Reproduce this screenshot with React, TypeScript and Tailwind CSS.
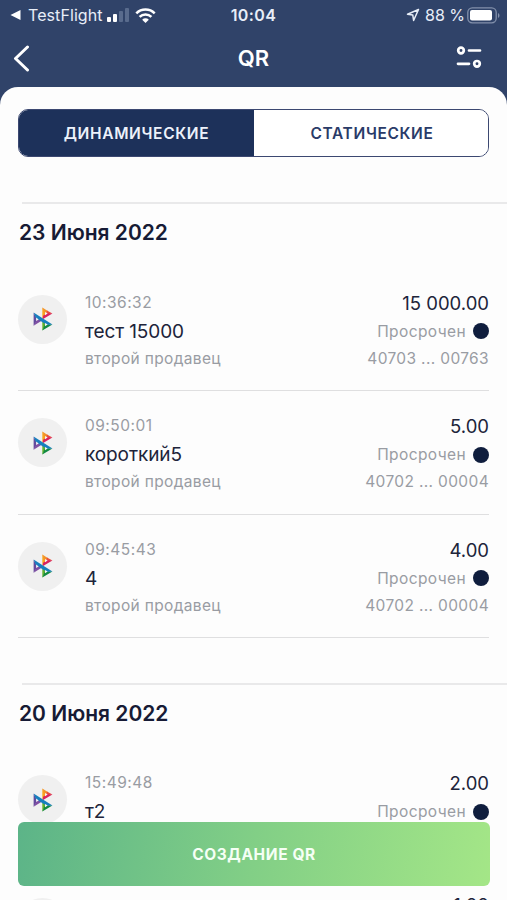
import React from "react";

type Payment = {
  time: string;
  title: string;
  seller: string;
  amount: string;
  status: string;
  account: string;
};

type Section = { date: string; items: Payment[] };

const seller = "второй продавец";
const status = "Просрочен";

const sections: Section[] = [
  {
    date: "23 Июня 2022",
    items: [
      { time: "10:36:32", title: "тест 15000", seller, amount: "15 000.00", status, account: "40703 ... 00763" },
      { time: "09:50:01", title: "короткий5", seller, amount: "5.00", status, account: "40702 ... 00004" },
      { time: "09:45:43", title: "4", seller, amount: "4.00", status, account: "40702 ... 00004" },
    ],
  },
  {
    date: "20 Июня 2022",
    items: [{ time: "15:49:48", title: "т2", seller, amount: "2.00", status, account: "40702 ... 00004" }],
  },
];

function SbpLogo() {
  return (
    <svg width="20" height="24" viewBox="0 0 20 24">
      <path d="M9.300 .6v11.200l4-5z" fill="#f8a51f" />
      <path d="M9.300 .6l5.500 3.300-3 2.600z" fill="#f3922a" />
      <path d="M14 3.400l5.400 3.200-7 1z" fill="#e9503a" />
      <path d="M19.400 6.600l-9.700 5.600.4-3.400 4-2.600z" fill="#d9235f" />
      <path d="M.6 5.800v13l4-6z" fill="#644a9d" />
      <path d="M.6 18.800l10-6.300-6-1.500z" fill="#7f4fa3" />
      <path d="M9.300 12v11.400l4-5.500z" fill="#62b22f" />
      <path d="M9.300 23.400l10.100-6-7.200-.4z" fill="#128a42" />
      <path d="M.6 5.600l18.800 11.800-5.800.3-10.800-6.700z" fill="#177fbe" />
      <path d="M12 4.900v3.300l2.700-1.600zM3.100 10.600v3.500l2.600-1.700zM12 15.900v3.300l2.700-1.700z" fill="#f4f2f2" />
    </svg>
  );
}

function StatusBar() {
  return (
    <div className="flex h-[30px] items-center px-[10px] text-[16px] text-[#e8eef8]">
      <div className="flex flex-1 items-center">
        <svg width="11" height="12" viewBox="0 0 11 12">
          <path d="M10.500 1v10L.5 6z" fill="#fff" />
        </svg>
        <span className="ml-[7px] w-[74px] whitespace-nowrap tracking-[0.08px]">TestFlight</span>
        <span className="ml-[5px] flex h-[14px] items-end gap-[2px]">
          <i className="h-[5px] w-[4px] rounded-[1px] bg-white" />
          <i className="h-[8px] w-[4px] rounded-[1px] bg-white" />
          <i className="h-[11px] w-[4px] rounded-[1px] bg-[#596b8d]" />
          <i className="h-[14px] w-[4px] rounded-[1px] bg-[#596b8d]" />
        </span>
        <svg className="ml-[6px]" width="21" height="15" viewBox="0 0 21 15" fill="none" stroke="#fff" strokeWidth="2.500">
          <path d="M1.300 5.300a13 13 0 0 1 18.400 0M4.600 8.900a8.300 8.300 0 0 1 11.800 0" />
          <path d="M10.500 15l-3.300-3.300a4.700 4.700 0 0 1 6.600 0z" fill="#fff" stroke="none" />
        </svg>
      </div>
      <span className="text-[16px] font-semibold tracking-[0.4px]">10:04</span>
      <div className="flex flex-1 items-center justify-end">
        <svg width="14" height="14" viewBox="0 0 14 14" fill="none" stroke="#e8eef8" strokeWidth="1.500" strokeLinejoin="round">
          <path d="M12.500 1.500L1.500 6.300l5.300.8.8 5.400z" />
        </svg>
        <span className="ml-[5px] w-[40px] whitespace-nowrap">88 %</span>
        <svg className="-mr-[3px] ml-[2px] shrink-0" width="33" height="17" viewBox="0 0 33 17">
          <rect x=".8" y=".8" width="28.400" height="15" rx="4.500" fill="none" stroke="#8290ab" strokeWidth="1.300" />
          <rect x="3" y="3" width="22" height="10.600" rx="2" fill="#fff" />
          <path d="M31 6v5c2-1 2-4 0-5z" fill="#8290ab" />
        </svg>
      </div>
    </div>
  );
}

function Avatar() {
  return (
    <div className="flex size-[49px] shrink-0 items-center justify-center rounded-full bg-[#f0f0f0]">
      <SbpLogo />
    </div>
  );
}

function Row({ item }: { item: Payment }) {
  return (
    <div className="mx-[18px] flex h-[123.5px] border-b-[1.5px] border-[#dfdfe0] pt-[27px]">
      <Avatar />
      <div className="-mt-[5px] ml-[18px] flex-1 text-[15.5px] text-[#999ca3]">
        <div className="h-[27px] leading-[26px] tracking-[0.48px]">{item.time}</div>
        <div className="h-[29px] text-[19px] leading-[30px] tracking-[-0.1px] text-[#20243a]">{item.title}</div>
        <div className="h-[26px] leading-[25px] tracking-[0.35px]">{item.seller}</div>
      </div>
      <div className="-mt-[5px] text-right text-[15.5px] text-[#999ca3]">
        <div className="h-[27px] text-[18.5px] leading-[26px] text-[#20243a]">{item.amount}</div>
        <div className="flex h-[29px] items-center justify-end gap-[7px] tracking-[0.4px]">
          <span className="pt-[1px]">{item.status}</span>
          <span className="size-[16px] rounded-full bg-[#0f1d3d]" />
        </div>
        <div className="h-[26px] leading-[25px] tracking-[0.35px]">{item.account}</div>
      </div>
    </div>
  );
}

export default function App() {
  return (
    <div className="relative flex h-[900px] w-full flex-col overflow-hidden bg-[#304369] font-['Inter','Liberation_Sans',sans-serif]">
      <header className="h-[87px] shrink-0">
        <StatusBar />
        <div className="flex h-[56px] items-center px-[13px]">
          <div className="flex-1">
            <svg width="18" height="27" viewBox="0 0 18 27" fill="none" stroke="#fff" strokeWidth="3" strokeLinecap="round" strokeLinejoin="round">
              <path d="M14.500 2L2.500 13.500l12 11.500" />
            </svg>
          </div>
          <h1 className="text-[22px] font-semibold text-white">QR</h1>
          <div className="flex flex-1 justify-end">
            <svg className="mr-[12px]" width="26" height="24" viewBox="0 0 26 24" fill="none" stroke="#fff" strokeWidth="2.700" strokeLinecap="round">
              <circle cx="5" cy="4.500" r="2.800" />
              <path d="M13 4.500h11M2 17.800h11" />
              <circle cx="21" cy="17.800" r="2.800" />
            </svg>
          </div>
        </div>
      </header>
      <main className="min-h-0 flex-1 overflow-hidden rounded-t-[18px] bg-[#fdfdfd] pt-[22px]">
        <div className="mx-[18px] flex h-[48px] overflow-hidden rounded-[10px] border-[1.5px] border-[#3c4871] text-[15.5px] font-semibold">
          <button className="w-[235px] bg-[#1d315a] pt-[2px] tracking-[0.65px] text-[#edf2fb]">ДИНАМИЧЕСКИЕ</button>
          <button className="flex-1 bg-white pt-[2px] pl-[2px] tracking-[0.65px] text-[#2a3b68]">СТАТИЧЕСКИЕ</button>
        </div>
        {sections.map((s, i) => (
          <section key={s.date} className={i === 0 ? "pt-[45px]" : "pt-[44.5px]"}>
            <div className="ml-[22px] h-[2px] bg-[#e9e9ea]" />
            <h2 className="ml-[19px] h-[63.5px] pt-[13px] text-[21px] leading-[32px] font-semibold text-[#171b35]">{s.date}</h2>
            {s.items.map((item) => (
              <Row key={item.time} item={item} />
            ))}
          </section>
        ))}
        <div className="mx-[18px] flex justify-between pt-[26px]">
          <Avatar />
          <div className="-mt-[6px] text-[18.5px] leading-[27px] text-[#20243a]">1.00</div>
        </div>
      </main>
      <button className="absolute right-[17px] bottom-[14px] left-[18px] h-[64px] rounded-[6px] bg-linear-[100deg,#5cb488,#82cf86_50%,#a4e687] pt-[2px] text-[15.5px] font-bold tracking-[0.6px] text-[#f5fff5]">
        СОЗДАНИЕ QR
      </button>
    </div>
  );
}
